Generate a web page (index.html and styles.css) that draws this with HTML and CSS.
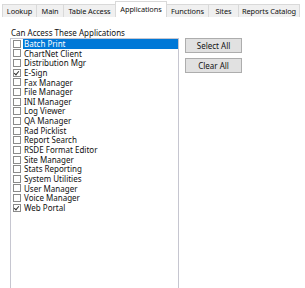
FILE: index.html
```html
<!DOCTYPE html>
<html lang="en">
<head>
    <meta charset="UTF-8">
    <title>Applications</title>
    <link rel="stylesheet" href="styles.css">
</head>
<body>
    <!-- Tab strip -->
    <div class="tabs">
        <div class="tab tab-lookup">Lookup</div>
        <div class="tab tab-main">Main</div>
        <div class="tab tab-table">Table Access</div>
        <div class="tab tab-apps active">Applications</div>
        <div class="tab tab-functions">Functions</div>
        <div class="tab tab-sites">Sites</div>
        <div class="tab tab-reports">Reports Catalog</div>
    </div>

    <div class="panel">
        <div class="caption">Can Access These Applications</div>
        <div class="row">
            <ul class="checklist">
                <li class="selected"><span class="box"></span><span class="label">Batch Print</span></li>
                <li><span class="box"></span><span class="label">ChartNet Client</span></li>
                <li><span class="box"></span><span class="label">Distribution Mgr</span></li>
                <li><span class="box checked"></span><span class="label">E-Sign</span></li>
                <li><span class="box"></span><span class="label">Fax Manager</span></li>
                <li><span class="box"></span><span class="label">File Manager</span></li>
                <li><span class="box"></span><span class="label">INI Manager</span></li>
                <li><span class="box"></span><span class="label">Log Viewer</span></li>
                <li><span class="box"></span><span class="label">QA Manager</span></li>
                <li><span class="box"></span><span class="label">Rad Picklist</span></li>
                <li><span class="box"></span><span class="label">Report Search</span></li>
                <li><span class="box"></span><span class="label">RSDE Format Editor</span></li>
                <li><span class="box"></span><span class="label">Site Manager</span></li>
                <li><span class="box"></span><span class="label">Stats Reporting</span></li>
                <li><span class="box"></span><span class="label">System Utilities</span></li>
                <li><span class="box"></span><span class="label">User Manager</span></li>
                <li><span class="box"></span><span class="label">Voice Manager</span></li>
                <li><span class="box checked"></span><span class="label">Web Portal</span></li>
            </ul>
            <div class="buttons">
                <button type="button">Select All</button>
                <button type="button">Clear All</button>
            </div>
        </div>
    </div>
</body>
</html>
```

FILE: styles.css
```css
body {
    margin: 0;
    width: 305px;
    height: 288px;
    overflow: hidden;
    background-color: #fff;
    font-family: "Noto Sans", sans-serif;
    font-size: 8px;
    color: #111;
}

/* Tab strip */
.tabs {
    display: flex;
    align-items: flex-end;
    height: 17px;
    padding-left: 2px;
}

.tab {
    box-sizing: border-box;
    flex: none;
    height: 13px;
    line-height: 12px;
    font-size: 7.4px;
    letter-spacing: -0.1px;
    text-align: center;
    background-color: #f0f0f0;
    border: 1px solid #d9d9d9;
    border-width: 1px 0 0 1px;
    white-space: nowrap;
}

.tab-lookup { width: 34px; }
.tab-main { width: 27px; }
.tab-table { width: 52px; }
.tab-apps { width: 52px; }
.tab-functions { width: 41px; }
.tab-sites { width: 30px; }

.tab-reports {
    width: 62px;
    border-right-width: 1px;
}

.tab.active {
    height: 16px;
    line-height: 14px;
    background-color: #fff;
    border-right-width: 1px;
}

.tab.active + .tab {
    border-left-width: 0;
}

/* Panel */
.panel {
    padding: 11px 0 0 10px;
}

.caption {
    height: 10px;
    line-height: 10px;
    padding-left: 1px;
}

.row {
    display: flex;
    gap: 5px;
}

.checklist {
    list-style: none;
    margin: 0;
    padding: 0;
    width: 167px;
    height: 260px;
    border: 1px solid #c6c6d0;
}

.checklist li {
    display: flex;
    align-items: center;
    height: 9.65px;
    padding-left: 2px;
}

.box {
    width: 6px;
    height: 6px;
    border: 1px solid #8a8a8a;
    margin-right: 2px;
    position: relative;
    flex: none;
}

.box.checked::after {
    content: "";
    position: absolute;
    left: 1px;
    top: 0;
    width: 2px;
    height: 4px;
    border: solid #333;
    border-width: 0 1px 1px 0;
    transform: rotate(40deg);
}

.label {
    flex: 1;
    height: 100%;
    line-height: 9.65px;
    padding-left: 1px;
}

.selected .label {
    background-color: #0078d7;
    color: #fff;
}

.buttons {
    display: flex;
    flex-direction: column;
    gap: 5px;
    margin-left: 1px;
}

button {
    width: 57px;
    height: 15px;
    padding: 0;
    background-color: #e1e1e1;
    border: 1px solid #adadad;
    font-family: inherit;
    font-size: 8px;
    color: #111;
}
```
